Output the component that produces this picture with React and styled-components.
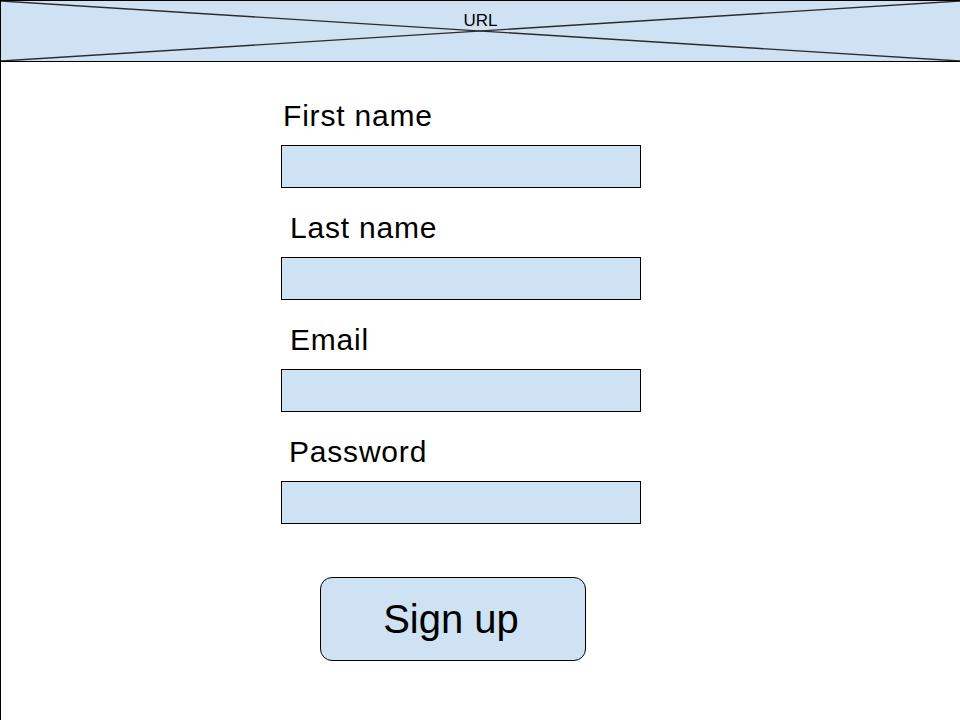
import React from "react"
import styled, { createGlobalStyle } from "styled-components"

const GlobalStyle = createGlobalStyle`
  html, body {
    margin: 0;
    padding: 0;
    background: #ffffff;
  }
  body {
    font-family: "Liberation Sans", Arial, sans-serif;
    color: #000000;
  }
`

const Page = styled.div`
  width: 960px;
  height: 720px;
  box-sizing: border-box;
  border-left: 1px solid #000;
  overflow: hidden;
`

const UrlBar = styled.header`
  position: relative;
  height: 62px;
  box-sizing: border-box;
  border-top: 1px solid #000;
  border-bottom: 1px solid #000;
  background: #cfe2f3;
  display: flex;
  justify-content: center;
`

const Cross = styled.svg`
  position: absolute;
  inset: 0;
  width: 100%;
  height: 100%;
`

const UrlText = styled.span`
  position: relative;
  font-size: 17px;
  line-height: 20px;
  padding-top: 10px;
`

const Form = styled.form`
  display: flex;
  flex-direction: column;
  width: 360px;
  margin-left: 280px;
  padding-top: 37px;
`

const Field = styled.div`
  display: flex;
  flex-direction: column;
  margin-bottom: 23px;
`

const Label = styled.label`
  font-size: 30px;
  line-height: 34px;
  letter-spacing: 0.8px;
  padding-left: ${(p) => p.$indent}px;
  margin-bottom: 12px;
`

const Input = styled.div`
  height: 43px;
  box-sizing: border-box;
  border: 1px solid #000;
  background: #cfe2f3;
`

const Button = styled.button`
  align-self: flex-start;
  margin-left: 39px;
  margin-top: 30px;
  width: 266px;
  height: 84px;
  box-sizing: border-box;
  border: 1px solid #000;
  border-radius: 12px;
  background: #cfe2f3;
  font-family: "Liberation Sans", Arial, sans-serif;
  font-size: 40px;
  color: #000;
  padding: 0 4px 0 0;
`

const fields = [
  { label: "First name", indent: 2 },
  { label: "Last name", indent: 9 },
  { label: "Email", indent: 9 },
  { label: "Password", indent: 8 },
]

export default function App() {
  return (
    <>
      <GlobalStyle />
      <Page>
        <UrlBar>
          <Cross viewBox="0 0 960 60" preserveAspectRatio="none">
            <line x1="0" y1="0" x2="960" y2="60" stroke="#2b2b2b" strokeWidth="1.4" />
            <line x1="0" y1="60" x2="960" y2="0" stroke="#2b2b2b" strokeWidth="1.4" />
          </Cross>
          <UrlText>URL</UrlText>
        </UrlBar>
        <Form onSubmit={(e) => e.preventDefault()}>
          {fields.map((f) => (
            <Field key={f.label}>
              <Label $indent={f.indent}>{f.label}</Label>
              <Input />
            </Field>
          ))}
          <Button type="submit">Sign up</Button>
        </Form>
      </Page>
    </>
  )
}
